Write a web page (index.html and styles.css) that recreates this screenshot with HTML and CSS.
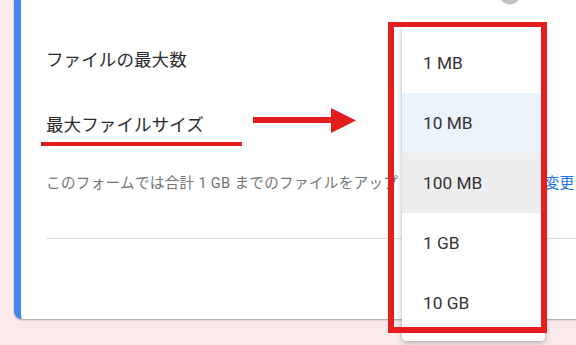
FILE: index.html
```html
<!DOCTYPE html>
<html lang="ja">
<head>
<meta charset="utf-8">
<link rel="stylesheet" href="styles.css">
</head>
<body>
<div class="stage">
  <div class="card">
    <div class="label">ファイルの最大数</div>
    <div class="label label-size">最大ファイルサイズ</div>
    <div class="helper"><span class="helper-text">このフォームでは合計 1 GB までのファイルをアップ</span><a class="helper-link">変更</a></div>
    <div class="divider"></div>
  </div>
  <div class="knob"></div>
  <div class="menu">
    <div class="item">1 MB</div>
    <div class="item item-selected">10 MB</div>
    <div class="item item-hover">100 MB</div>
    <div class="item">1 GB</div>
    <div class="item">10 GB</div>
  </div>
  <div class="mark-underline"></div>
  <svg class="mark-arrow" width="104" height="26" viewBox="0 0 104 26">
    <rect x="0" y="9" width="80" height="6" fill="#e41d1f"/>
    <polygon points="78,0 103,12.5 78,25" fill="#e41d1f"/>
  </svg>
  <div class="mark-box"></div>
</div>
</body>
</html>
```
FILE: styles.css
```css
* { box-sizing: border-box; }
html, body { margin: 0; padding: 0; }
body {
  background: #fbeae9;
  font-family: Roboto, "Noto Sans CJK JP", sans-serif;
  overflow: hidden;
}
.stage {
  position: relative;
  width: 576px;
  height: 345px;
  overflow: hidden;
}
.card {
  margin-left: 14px;
  width: 620px;
  height: 319px;
  background: #fff;
  border-left: 7px solid #4285f4;
  border-bottom-left-radius: 8px;
  box-shadow: 0 1px 2px rgba(0, 0, 0, 0.35);
  padding: 48px 0 0 25px;
}
.label {
  font-size: 17.6px;
  line-height: 24px;
  height: 24px;
  color: #2a2b2e;
  white-space: nowrap;
}
.label-size { margin-top: 41px; }
.helper {
  margin-top: 36px;
  width: 528px;
  display: flex;
  font-size: 14.6px;
  line-height: 20px;
  letter-spacing: 0.3px;
  color: #70757a;
  white-space: nowrap;
}
.helper-text { flex: none; }
.helper-link {
  margin-left: auto;
  color: #1a73e8;
  letter-spacing: 0;
  flex: none;
}
.divider {
  margin-top: 45px;
  height: 1px;
  background: #dadce0;
}
.knob {
  position: absolute;
  left: 500px;
  top: -17px;
  width: 20px;
  height: 20px;
  border-radius: 50%;
  background: #c4c4c4;
  box-shadow: 0 1px 2px rgba(0, 0, 0, 0.4);
}
.menu {
  position: absolute;
  left: 402px;
  top: 25px;
  width: 143px;
  padding: 8px 0;
  background: #fff;
  border-radius: 4px;
  box-shadow: 0 2px 6px rgba(0, 0, 0, 0.25), 0 0 2px rgba(0, 0, 0, 0.12);
}
.item {
  height: 60px;
  display: flex;
  align-items: center;
  padding-left: 21px;
  font-size: 17.3px;
  color: #333;
}
.item-selected { background: #ebf3fb; }
.item-hover { background: #eeeeee; }
.mark-underline {
  position: absolute;
  left: 41px;
  top: 142px;
  width: 201px;
  height: 4px;
  background: #e41d1f;
}
.mark-arrow {
  position: absolute;
  left: 253px;
  top: 108px;
}
.mark-box {
  position: absolute;
  left: 388px;
  top: 22px;
  width: 159px;
  height: 311px;
  border: 6px solid #e41d1f;
  border-top-width: 5px;
  border-bottom-width: 6px;
}
```
